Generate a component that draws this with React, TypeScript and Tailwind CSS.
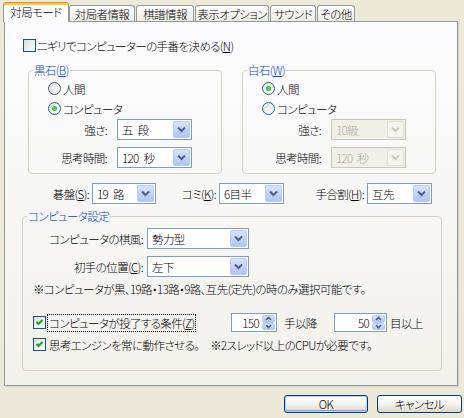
import clsx from 'clsx'
import type { ReactNode } from 'react'

const tabs = [
  { label: '対局モード', w: 'w-[66px]', active: true },
  { label: '対局者情報', w: 'w-[66px]' },
  { label: '棋譜情報', w: 'w-[58px] ml-[1px]' },
  { label: '表示オプション', w: 'w-[74px] ml-[1px]' },
  { label: 'サウンド', w: 'w-[46px] ml-[1px]' },
  { label: 'その他', w: 'w-[38px] ml-[1px]' },
]

function Checkbox({ checked }: { checked?: boolean }) {
  return (
    <span className="flex h-[13px] w-[13px] shrink-0 items-center justify-center border border-[#1C5180] bg-linear-to-br from-[#DCDCD7] to-white">
      {checked && (
        <svg width="9" height="9" viewBox="0 0 9 9">
          <path d="M1.5 4 L3.5 6 L7.5 2" stroke="#21A121" strokeWidth="2" fill="none" />
        </svg>
      )}
    </span>
  )
}

function Radio({ label, checked, className }: { label: string; checked?: boolean; className?: string }) {
  return (
    <div className={clsx('flex h-[13px] items-center gap-[2px]', className)}>
      <span className="flex h-[13px] w-[13px] shrink-0 items-center justify-center rounded-full border border-[#2C628B] bg-linear-to-br from-[#DCDCD7] to-white">
        {checked && <span className="h-[5px] w-[5px] rounded-full bg-radial from-[#6CD56C] to-[#21A121]" />}
      </span>
      <span>{label}</span>
    </div>
  )
}

function Combo({ value, className, disabled }: { value: string; className: string; disabled?: boolean }) {
  return (
    <div
      className={clsx(
        'flex h-[21px] items-center border p-[1px]',
        disabled ? 'border-[#C9C7BA] bg-[#F0EFE8] text-[#ACA899]' : 'border-[#7F9DB9] bg-white',
        className,
      )}
    >
      <span className="flex-1 whitespace-nowrap pl-[3px] [word-spacing:3px]">{value}</span>
      <span
        className={clsx(
          'flex h-[17px] w-[17px] shrink-0 items-center justify-center rounded-[2px] border',
          disabled
            ? 'border-[#E3E1D5] bg-[#F4F3EE]'
            : 'border-[#B9CBF3] bg-linear-to-b from-[#D6E2FC] to-[#B0C5F5]',
        )}
      >
        <svg width="11" height="11" viewBox="0 0 11 11">
          <path
            d="M2 3.5 L5.5 7 L9 3.5"
            stroke={disabled ? '#C9C7BA' : '#4D6185'}
            strokeWidth="2"
            fill="none"
          />
        </svg>
      </span>
    </div>
  )
}

function SpinHalf({ up }: { up?: boolean }) {
  return (
    <span className="flex flex-1 items-center justify-center rounded-[2px] border border-[#B9CBF3] bg-linear-to-b from-[#D6E2FC] to-[#B0C5F5]">
      <svg width="7" height="5" viewBox="0 0 7 5">
        <path d={up ? 'M1 4 L3.5 1.5 L6 4' : 'M1 1 L3.5 3.5 L6 1'} stroke="#4D6185" strokeWidth="1.6" fill="none" />
      </svg>
    </span>
  )
}

function Spin({ value, className }: { value: string; className: string }) {
  return (
    <div className={clsx('flex h-[19px] items-stretch border border-[#7F9DB9] bg-white p-[1px]', className)}>
      <span className="flex flex-1 items-center justify-end pr-[3px]">{value}</span>
      <span className="flex w-[13px] flex-col">
        <SpinHalf up />
        <SpinHalf />
      </span>
    </div>
  )
}

function Group({ legend, className, children }: { legend: ReactNode; className: string; children: ReactNode }) {
  return (
    <fieldset className={clsx('min-w-0 rounded-[4px] border border-[#D0D0BF]', className)}>
      <legend className="ml-[4px] px-[1px] text-[#0046D5]">{legend}</legend>
      {children}
    </fieldset>
  )
}

function Field({ label, labelW, children, className }: { label: ReactNode; labelW: string; children: ReactNode; className?: string }) {
  return (
    <div className={clsx('flex items-center', className)}>
      <span className={clsx('whitespace-nowrap text-right', labelW)}>{label}</span>
      {children}
    </div>
  )
}

function Stone({ name, keyChar, computer }: { name: string; keyChar: string; computer?: boolean }) {
  const off = !computer
  return (
    <Group legend={<>{name}(<u>{keyChar}</u>)</>} className="h-[111px] w-[194px]">
      <Radio label="人間" checked={!computer} className="ml-[19px] mt-[5px]" />
      <Radio label="コンピュータ" checked={computer} className="ml-[19px] mt-[7px]" />
      <Field label="強さ:" labelW="w-[78px]" className="mt-[4px]">
        <Combo value={computer ? '五 段' : '10級'} disabled={off} className="ml-[10px] w-[75px]" />
      </Field>
      <Field label="思考時間:" labelW="w-[78px]" className="mt-[7px]">
        <Combo value="120 秒" disabled={off} className="ml-[10px] w-[75px]" />
      </Field>
    </Group>
  )
}

function XpButton({ children, primary, className }: { children: ReactNode; primary?: boolean; className: string }) {
  return (
    <button
      className={clsx(
        'flex h-[18px] items-center justify-center rounded-[3px] border border-[#003C74] bg-linear-to-b from-white via-[#F4F3EE] to-[#DCD8CC]',
        primary && 'shadow-[inset_0_0_0_1px_#BCD0F5,inset_0_-1px_0_1px_#7FA0E2]',
        className,
      )}
    >
      {children}
    </button>
  )
}

export default function App() {
  return (
    <div className="h-[418px] w-[464px] overflow-hidden bg-[#ECE9D8] text-[11.5px] leading-[14px] font-light tracking-[-0.6px] text-black [font-family:'Noto_Sans_CJK_JP',sans-serif] [font-feature-settings:'palt']">
      {/* Tabs */}
      <div className="relative z-10 -mb-[1px] flex h-[22px] items-end pl-[3px]">
        {tabs.map((t) =>
          t.active ? (
            <div
              key={t.label}
              className={clsx(
                'flex h-[20px] items-center justify-center whitespace-nowrap rounded-t-[3px] border-x border-t border-x-[#919B9C] border-t-[#E68B2C] bg-[#FCFCFE] pb-[1px] shadow-[inset_0_2px_0_#FFC73C]',
                t.w,
              )}
            >
              {t.label}
            </div>
          ) : (
            <div
              key={t.label}
              className={clsx(
                'mb-[1px] flex h-[16px] items-center justify-center whitespace-nowrap rounded-t-[3px] border border-b-0 border-[#919B9C] bg-linear-to-b from-white to-[#ECEBE5]',
                t.w,
              )}
            >
              {t.label}
            </div>
          ),
        )}
      </div>

      {/* Panel */}
      <div className="ml-[4px] h-[365px] w-[454px] border border-[#919B9C] bg-linear-to-b from-[#FCFCFE] to-[#F2F1EB] pl-[17px] pt-[17px] shadow-[1px_1px_0_#D6D3C4]">
        <div className="ml-[1px] flex h-[13px] items-center gap-[1px]">
          <Checkbox />
          <span>
            ニギリでコンピューターの手番を決める(<u>N</u>)
          </span>
        </div>

        <div className="ml-[6px] mt-[11px] flex gap-[20px]">
          <Stone name="黒石" keyChar="B" computer />
          <Stone name="白石" keyChar="W" />
        </div>

        <div className="mt-[9px] flex h-[21px] items-center">
          <span className="w-[67px] text-right">
            碁盤(<u>S</u>):
          </span>
          <Combo value="19 路" className="ml-[3px] w-[64px]" />
          <span className="w-[60px] text-right">
            コミ(<u>K</u>):
          </span>
          <Combo value="6目半" className="ml-[3px] w-[65px]" />
          <span className="w-[80px] text-right">
            手合割(<u>H</u>):
          </span>
          <Combo value="互先" className="ml-[3px] w-[65px]" />
        </div>

        <Group legend="コンピュータ設定" className="mt-[5px] h-[162px] w-[420px]">
          <Field label="コンピュータの棋風:" labelW="w-[120px]" className="mt-[5px]">
            <Combo value="勢力型" className="ml-[4px] w-[102px]" />
          </Field>
          <Field label={<>初手の位置(<u>C</u>):</>} labelW="w-[120px]" className="mt-[7px]">
            <Combo value="左下" className="ml-[4px] w-[102px]" />
          </Field>
          <p className="ml-[10px] mt-[5px]">※コンピュータが黒、19路・13路・9路、互先(定先)の時のみ選択可能です。</p>

          <div className="ml-[10px] mt-[17px] flex h-[19px] items-center">
            <div className="flex w-[198px] items-center">
              <Checkbox checked />
              <span className="ml-[1px] border border-dotted border-black px-[1px] leading-[16px]">
                コンピュータが投了する条件(<u>Z</u>)
              </span>
            </div>
            <Spin value="150" className="w-[46px]" />
            <span className="ml-[7px] w-[50px]">手以降</span>
            <Spin value="50" className="w-[53px]" />
            <span className="ml-[3px]">目以上</span>
          </div>

          <div className="ml-[10px] mt-[6px] flex h-[13px] items-center gap-[3px]">
            <Checkbox checked />
            <span>思考エンジンを常に動作させる。　※2スレッド以上のCPUが必要です。</span>
          </div>
        </Group>
      </div>

      {/* Buttons */}
      <div className="mt-[9px] flex justify-end gap-[9px] pr-[2px]">
        <XpButton primary className="w-[84px]">
          OK
        </XpButton>
        <XpButton className="w-[85px]">キャンセル</XpButton>
      </div>
    </div>
  )
}
